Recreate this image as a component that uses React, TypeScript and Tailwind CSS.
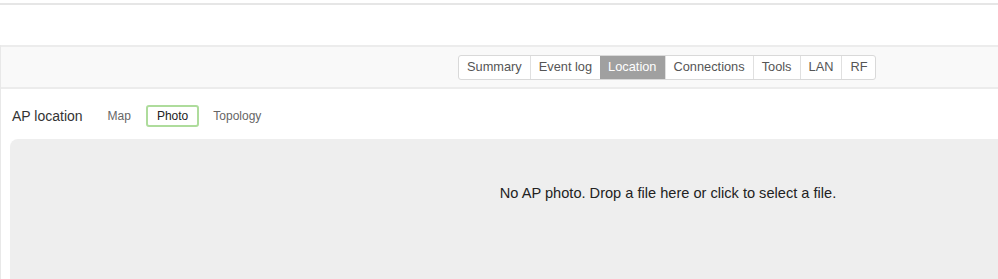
const tabs = ["Summary", "Event log", "Location", "Connections", "Tools", "LAN", "RF"];

export default function App() {
  return (
    <div
      className="h-[279px] w-[998px] overflow-hidden bg-white text-[#555]"
      style={{ fontFamily: "'Liberation Sans', Arial, sans-serif" }}
    >
      <div className="mt-[3px] h-[2px] bg-[#e6e6e6]" />
      <div className="mt-[40px] border-l border-[#e8e8e8]">
        <div className="flex h-[44px] items-center border-y-2 border-[#ececec] bg-[#f9f9f9] pl-[457px]">
          <div className="flex h-[25px] overflow-hidden rounded-[3px] border border-[#d9d9d9] bg-white">
            {tabs.map((t, i) => (
              <div
                key={t}
                className={
                  t === "Location"
                    ? "flex items-center bg-[#a0a0a0] px-[8px] text-[12.8px] text-white"
                    : i === 0
                      ? "flex items-center px-[8px] text-[12.8px] text-[#555]"
                      : "flex items-center border-l border-[#e0e0e0] px-[8px] text-[12.8px] text-[#555]"
                }
              >
                {t}
              </div>
            ))}
          </div>
        </div>
        <div className="flex items-center pl-[11px] pt-[16px]">
          <span className="text-[14px] text-[#333]">AP location</span>
          <span className="ml-[25px] text-[12px] text-[#666]">Map</span>
          <span className="ml-[15px] rounded-[3px] border-2 border-[#aedc9c] px-[9px] py-[1px] text-[12px] leading-[16px] text-[#222]">
            Photo
          </span>
          <span className="ml-[14px] text-[12px] text-[#666]">Topology</span>
        </div>
        <div className="ml-[9px] mt-[12px] flex h-[160px] w-[1316px] justify-center rounded-[8px] bg-[#eeeeee] pt-[44px]">
          <span className="text-[14.6px] text-[#222]">No AP photo. Drop a file here or click to select a file.</span>
        </div>
      </div>
    </div>
  );
}
